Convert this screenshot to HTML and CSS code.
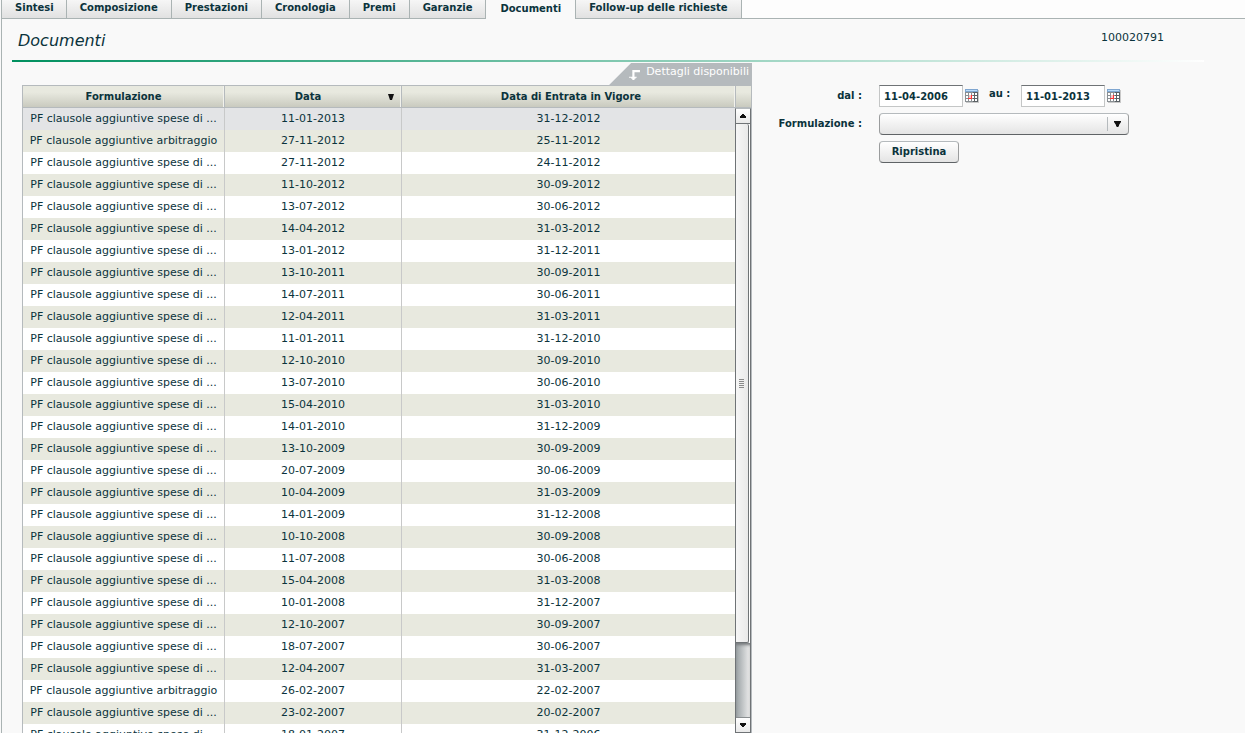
FILE: index.html
```html
<!DOCTYPE html>
<html lang="it">
<head>
<meta charset="utf-8">
<title>Documenti</title>
<link rel="stylesheet" href="styles.css">
</head>
<body>
<svg class="defs" aria-hidden="true">
  <symbol id="calendar" viewBox="0 0 14 14">
    <path fill="#c9c9c9" d="M1 1h13v13H1z"/>
    <path fill="#5c6266" d="M0 0h13v13H0z"/>
    <path fill="#8a9094" d="M0 0h8v13H0z"/>
    <path fill="#7fa6d0" d="M0 0h13v3H0z"/>
    <path fill="#b9dcfa" d="M1 1h11v1H1z"/>
    <path fill="#fff" d="M1 4h2v2H1zM4 4h2v2H4zM7 4h2v2H7zM10 4h2v2h-2zM1 7h2v2H1zM7 7h2v2H7zM10 7h2v2h-2zM1 10h2v2H1zM4 10h2v2H4zM7 10h2v2H7zM10 10h2v2h-2z"/>
    <path fill="#ffc4c4" d="M4 6h2v3H4z"/>
    <path fill="#f33" d="M3 9h4v1H3zM6 6h1v4H6z"/>
  </symbol>
</svg>
<nav class="tabs">
  <button class="tab">Sintesi</button>
  <button class="tab">Composizione</button>
  <button class="tab">Prestazioni</button>
  <button class="tab">Cronologia</button>
  <button class="tab">Premi</button>
  <button class="tab">Garanzie</button>
  <button class="tab tab-active">Documenti</button>
  <button class="tab">Follow-up delle richieste</button>
  <span class="tabs-rest"></span>
</nav>
<main class="panel">
  <header class="heading">
    <h1 class="title">Documenti</h1>
    <span class="policy">100020791</span>
  </header>
  <div class="content">
    <section class="list">
      <div class="details">
        <svg class="details-icon" viewBox="0 0 10 11"><path fill="#fff" d="M3 1h7v2H5v4h2v1H6v1H5v1H3V9H2V8H0V7h3z"/></svg>
        <span>Dettagli disponibili</span>
      </div>
      <div class="grid">
        <div class="rows">
          <table class="table">
            <colgroup><col class="col-form"><col class="col-date"><col class="col-entry"></colgroup>
            <thead><tr><th>Formulazione</th><th class="sorted">Data<svg class="sort" viewBox="0 0 6 6"><path d="M0 0h6L4 6H2z"/></svg></th><th class="entry">Data di Entrata in Vigore</th></tr></thead>
            <tbody>
              <tr class="hover"><td>PF clausole aggiuntive spese di ...</td><td>11-01-2013</td><td>31-12-2012</td></tr>
              <tr><td>PF clausole aggiuntive arbitraggio</td><td>27-11-2012</td><td>25-11-2012</td></tr>
              <tr><td>PF clausole aggiuntive spese di ...</td><td>27-11-2012</td><td>24-11-2012</td></tr>
              <tr><td>PF clausole aggiuntive spese di ...</td><td>11-10-2012</td><td>30-09-2012</td></tr>
              <tr><td>PF clausole aggiuntive spese di ...</td><td>13-07-2012</td><td>30-06-2012</td></tr>
              <tr><td>PF clausole aggiuntive spese di ...</td><td>14-04-2012</td><td>31-03-2012</td></tr>
              <tr><td>PF clausole aggiuntive spese di ...</td><td>13-01-2012</td><td>31-12-2011</td></tr>
              <tr><td>PF clausole aggiuntive spese di ...</td><td>13-10-2011</td><td>30-09-2011</td></tr>
              <tr><td>PF clausole aggiuntive spese di ...</td><td>14-07-2011</td><td>30-06-2011</td></tr>
              <tr><td>PF clausole aggiuntive spese di ...</td><td>12-04-2011</td><td>31-03-2011</td></tr>
              <tr><td>PF clausole aggiuntive spese di ...</td><td>11-01-2011</td><td>31-12-2010</td></tr>
              <tr><td>PF clausole aggiuntive spese di ...</td><td>12-10-2010</td><td>30-09-2010</td></tr>
              <tr><td>PF clausole aggiuntive spese di ...</td><td>13-07-2010</td><td>30-06-2010</td></tr>
              <tr><td>PF clausole aggiuntive spese di ...</td><td>15-04-2010</td><td>31-03-2010</td></tr>
              <tr><td>PF clausole aggiuntive spese di ...</td><td>14-01-2010</td><td>31-12-2009</td></tr>
              <tr><td>PF clausole aggiuntive spese di ...</td><td>13-10-2009</td><td>30-09-2009</td></tr>
              <tr><td>PF clausole aggiuntive spese di ...</td><td>20-07-2009</td><td>30-06-2009</td></tr>
              <tr><td>PF clausole aggiuntive spese di ...</td><td>10-04-2009</td><td>31-03-2009</td></tr>
              <tr><td>PF clausole aggiuntive spese di ...</td><td>14-01-2009</td><td>31-12-2008</td></tr>
              <tr><td>PF clausole aggiuntive spese di ...</td><td>10-10-2008</td><td>30-09-2008</td></tr>
              <tr><td>PF clausole aggiuntive spese di ...</td><td>11-07-2008</td><td>30-06-2008</td></tr>
              <tr><td>PF clausole aggiuntive spese di ...</td><td>15-04-2008</td><td>31-03-2008</td></tr>
              <tr><td>PF clausole aggiuntive spese di ...</td><td>10-01-2008</td><td>31-12-2007</td></tr>
              <tr><td>PF clausole aggiuntive spese di ...</td><td>12-10-2007</td><td>30-09-2007</td></tr>
              <tr><td>PF clausole aggiuntive spese di ...</td><td>18-07-2007</td><td>30-06-2007</td></tr>
              <tr><td>PF clausole aggiuntive spese di ...</td><td>12-04-2007</td><td>31-03-2007</td></tr>
              <tr><td>PF clausole aggiuntive arbitraggio</td><td>26-02-2007</td><td>22-02-2007</td></tr>
              <tr><td>PF clausole aggiuntive spese di ...</td><td>23-02-2007</td><td>20-02-2007</td></tr>
              <tr><td>PF clausole aggiuntive spese di ...</td><td>18-01-2007</td><td>31-12-2006</td></tr>
            </tbody>
          </table>
        </div>
        <div class="side">
          <div class="side-head"></div>
          <div class="scrollbar">
            <button class="arrow" aria-label="Su"><svg class="arrow-icon" viewBox="0 0 6 4"><path d="M2 0h2v1h1v1h1v2H0V2h1V1h1z"/></svg></button>
            <div class="thumb"><span class="grip"></span></div>
            <div class="track"></div>
            <button class="arrow" aria-label="Giù"><svg class="arrow-icon" viewBox="0 0 6 4"><path d="M0 0h6v2H5v1H4v1H2V3H1V2H0z"/></svg></button>
          </div>
        </div>
      </div>
    </section>
    <form class="filters">
      <label class="label" for="from">dal :</label>
      <div class="dates">
        <input class="date" id="from" type="text" value="11-04-2006">
        <button class="pick" type="button" aria-label="Calendario dal"><svg class="calendar"><use href="#calendar"/></svg></button>
        <label class="to" for="until">au :</label>
        <input class="date" id="until" type="text" value="11-01-2013">
        <button class="pick" type="button" aria-label="Calendario au"><svg class="calendar"><use href="#calendar"/></svg></button>
      </div>
      <label class="label" for="kind">Formulazione :</label>
      <div class="combo">
        <select class="select" id="kind"><option></option></select>
        <svg class="combo-arrow" viewBox="0 0 7 6"><path d="M0 0h7v1L5 4v1L4 6H3L2 5V4L0 1z"/></svg>
      </div>
      <button class="reset" type="button">Ripristina</button>
    </form>
  </div>
</main>
</body>
</html>
```
FILE: styles.css
```css
* { box-sizing: border-box; }
body {
  margin: 0;
  height: 100vh;
  display: flex;
  flex-direction: column;
  overflow: hidden;
  background: #f9f9f9;
  color: #0b333c;
  font: 11px/22px "DejaVu Sans", sans-serif;
}
button, input, select { font: bold 10px/16px "DejaVu Sans", sans-serif; color: inherit; margin: 0; }
.defs { position: absolute; width: 0; height: 0; }

.tabs { display: flex; height: 19px; padding-left: 1px; flex: none; }
.tab {
  border: 0;
  border-right: 1px solid #aab3b3;
  border-bottom: 1px solid #aab3b3;
  background: linear-gradient(#f6f6f6, #e1e1e1);
  padding: 0 13px 3px;
  white-space: nowrap;
}
.tab:first-child { border-left: 1px solid #aab3b3; padding-right: 12px; }
.tab-active { background: #f9f9f9; border-bottom: 0; padding: 0 14px 2px; }
.tabs-rest { flex: 1; border-bottom: 1px solid #aab3b3; background: #fdfdfd; }

.panel {
  flex: 1;
  min-height: 0;
  margin-left: 1px;
  border-left: 1px solid #aab3b3;
  display: flex;
  flex-direction: column;
}
.heading {
  flex: none;
  display: flex;
  justify-content: space-between;
  margin: 0 41px 0 10px;
  padding: 9px 40px 5px 6px;
  height: 43px;
  border-bottom: 2px solid;
  border-image: linear-gradient(90deg, #00905f, #fff) 1;
}
.title { margin: 1px 0 0; font-size: 16px; line-height: 24px; font-weight: normal; font-style: italic; }
.policy { line-height: 20px; }
.content {
  flex: 1;
  min-height: 0;
  display: grid;
  grid-template-columns: 730fr 493fr;
  grid-template-rows: minmax(0, 1fr);
  padding: 1px 0 0 20px;
}
.list { display: flex; flex-direction: column; min-height: 0; }
.details {
  flex: none;
  align-self: flex-end;
  display: flex;
  gap: 6px;
  height: 22px;
  padding: 0 3px 0 20px;
  background: #b5babd;
  color: #fff;
  line-height: 18px;
  clip-path: polygon(22px 0, 100% 0, 100% 100%, 0 100%);
}
.details-icon { width: 11px; height: 12px; margin-top: 6px; }
.grid {
  flex: 1;
  min-height: 0;
  display: flex;
  border: 1px solid #b5babd;
  border-bottom: 0;
  background: #fff;
}
.rows { flex: 1; overflow: hidden; }
.table { width: 100%; table-layout: fixed; border-collapse: separate; border-spacing: 0; text-align: center; }
.col-form { width: 202px; }
.col-date { width: 177px; }
th, .side-head {
  height: 22px;
  border-bottom: 1px solid #b5babd;
  background: linear-gradient(#e8e9df 30%, #c9cabf);
}
th { padding: 0; font-size: 10px; line-height: 20px; border-right: 1px solid #b5babd; box-shadow: inset -1px 0 #f2f2ec; }
.sorted { position: relative; padding-right: 10px; }
.sort { position: absolute; right: 7px; top: 8px; width: 6px; height: 6px; fill: #111; }
.entry { padding-left: 5px; border-right: 0; }
td { padding: 0; height: 22px; line-height: 22px; white-space: nowrap; border-right: 1px solid #c8c9c9; }
td:last-child { border-right: 0; }
tbody tr:nth-child(even) { background: #e8e9df; }
.hover { background: #e3e4e6; }

.side { width: 16px; flex: none; display: flex; flex-direction: column; border-left: 1px solid #b5babd; }
.side-head { flex: none; }
.scrollbar {
  flex: 1;
  min-height: 0;
  display: flex;
  flex-direction: column;
  margin-left: -1px;
  border: 1px solid #6f7376;
  border-top-color: #b5babd;
}
.arrow { flex: none; height: 15px; padding: 0; border: 0; background: linear-gradient(#fff, #e9e9e9); display: grid; place-items: center; }
.arrow:first-child { border-bottom: 1px solid #6f7376; }
.arrow:last-child { border-top: 1px solid #8a8e90; }
.arrow-icon { width: 6px; height: 4px; fill: #111; }
.thumb {
  flex: 519;
  display: grid;
  place-items: center;
  padding-right: 2px;
  border-right: 1px solid #6f7376;
  border-bottom: 1px solid #6f7376;
  border-radius: 0 2px 2px 0;
  margin-right: 1px;
  background: linear-gradient(90deg, #f6f6f6, #e9e9e9);
}
.grip { width: 5px; height: 9px; background: repeating-linear-gradient(#8a8a8a 0 1px, transparent 1px 2px); }
.track { flex: 74; background: linear-gradient(90deg, #9aa1a4, #ececec); box-shadow: inset 0 3px 3px -1px #777b7e; }

.filters {
  display: grid;
  grid-template-columns: 110px minmax(0, 250px);
  grid-auto-rows: 22px;
  align-content: start;
  gap: 6px 17px;
  padding-top: 22px;
  font-size: 10px;
  font-weight: bold;
}
.label { text-align: right; white-space: nowrap; line-height: 22px; }
.dates { display: flex; }
.date {
  width: 84px;
  height: 22px;
  padding: 0 4px;
  border: 1px solid #c4c6c6;
  border-top-color: #6f7376;
  background: #fff;
}
.pick { width: 16px; padding: 4px 0 0 2px; border: 0; background: none; display: flex; }
.calendar { width: 14px; height: 14px; }
.to { width: 42px; padding-left: 10px; line-height: 18px; }
.combo { position: relative; }
.select, .reset {
  height: 22px;
  border: 1px solid #9a9c9d;
  border-top-color: #b5babd;
  border-bottom-color: #5f6366;
  border-radius: 4px;
  background: linear-gradient(#fff, #e4e4e4);
}
.select { appearance: none; width: 100%; }
.combo-arrow {
  position: absolute;
  right: 1px;
  top: 4px;
  width: 21px;
  height: 14px;
  padding: 4px 7px 4px 6px;
  border-left: 1px solid #b5babd;
  fill: #111;
  pointer-events: none;
}
.reset { grid-column: 2; justify-self: start; width: 80px; padding: 0; }
```
